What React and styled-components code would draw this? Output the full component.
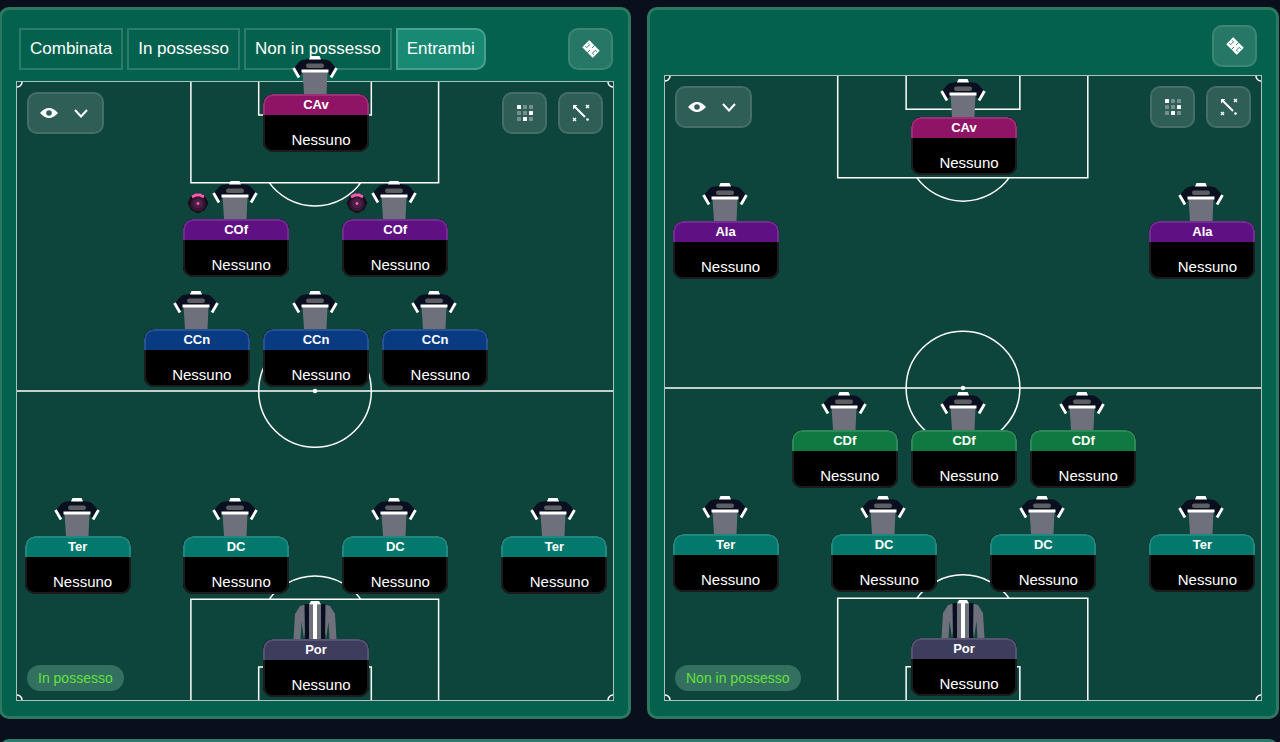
import { useState } from 'react';
import styled, { createGlobalStyle } from 'styled-components';

const roleColors = {
  CAv: '#8f1465',
  COf: '#5f1183',
  Ala: '#5f1183',
  CCn: '#093b82',
  CDf: '#0f7941',
  Ter: '#03786c',
  DC: '#03786c',
  Por: '#3f3d5e',
};

const backLine = [
  { role: 'Ter', x: 10, y: 67.3 },
  { role: 'DC', x: 36.6, y: 67.3 },
  { role: 'DC', x: 63.3, y: 67.3 },
  { role: 'Ter', x: 90, y: 67.3 },
  { role: 'Por', x: 50, y: 83.9, keeper: true },
];

const inPossession = [
  { role: 'CAv', x: 50, y: -4.2 },
  { role: 'COf', x: 36.6, y: 16 },
  { role: 'COf', x: 63.3, y: 16 },
  { role: 'CCn', x: 30, y: 33.8 },
  { role: 'CCn', x: 50, y: 33.8 },
  { role: 'CCn', x: 70, y: 33.8 },
  ...backLine,
].map((player) => ({ ...player, badge: player.role === 'COf' }));

const outOfPossession = [
  { role: 'CAv', x: 50, y: 0.5 },
  { role: 'Ala', x: 10, y: 17.2 },
  { role: 'Ala', x: 90, y: 17.2 },
  { role: 'CDf', x: 30, y: 50.6 },
  { role: 'CDf', x: 50, y: 50.6 },
  { role: 'CDf', x: 70, y: 50.6 },
  ...backLine,
];

const tabs = ['Combinata', 'In possesso', 'Non in possesso', 'Entrambi'];

export default function App() {
  const [activeTab, setActiveTab] = useState('Entrambi');

  return (
    <>
      <GlobalStyle />
      <Page>
        <Panels>
          <Panel>
            <Toolbar>
              <TabList>
                {tabs.map((tab) => (
                  <Tab
                    key={tab}
                    type="button"
                    aria-pressed={tab === activeTab}
                    $active={tab === activeTab}
                    onClick={() => setActiveTab(tab)}
                  >
                    {tab}
                  </Tab>
                ))}
              </TabList>
              <ToolButton type="button" aria-label="Tattica">
                <TacticIcon />
              </ToolButton>
            </Toolbar>
            <Pitch label="In possesso" players={inPossession} />
          </Panel>
          <Panel>
            <Toolbar $compact>
              <ToolButton type="button" aria-label="Tattica">
                <TacticIcon />
              </ToolButton>
            </Toolbar>
            <Pitch label="Non in possesso" players={outOfPossession} />
          </Panel>
        </Panels>
        <LowerPanel />
      </Page>
    </>
  );
}

function Pitch({ label, players }) {
  return (
    <PitchField>
      <PitchLines />
      <PitchTools>
        <ViewButton type="button" aria-label="Visualizza">
          <EyeIcon />
          <ChevronIcon />
        </ViewButton>
        <ToolGroup>
          <ToolButton type="button" aria-label="Posizioni">
            <GridIcon />
          </ToolButton>
          <ToolButton type="button" aria-label="Movimenti">
            <MovesIcon />
          </ToolButton>
        </ToolGroup>
      </PitchTools>
      {players.map((player, index) => (
        <Player key={index} style={{ left: `${player.x}%`, top: `${player.y}%` }}>
          {player.badge && <RoleBadge />}
          {player.keeper ? <KeeperShirt /> : <Shirt />}
          <Card>
            <Role $color={roleColors[player.role]}>{player.role}</Role>
            <PlayerName>Nessuno</PlayerName>
          </Card>
        </Player>
      ))}
      <PhaseLabel>{label}</PhaseLabel>
    </PitchField>
  );
}

function PitchLines() {
  return (
    <LinesSvg aria-hidden="true">
      <line x1="0" x2="100%" y1="50%" y2="50%" />
      <circle cx="0" cy="0" r="5" />
      <circle cx="100%" cy="0" r="5" />
      <circle cx="0" cy="100%" r="5" />
      <circle cx="100%" cy="100%" r="5" />
      <svg viewBox="0 0 500 620" width="100%" height="100%">
        <path d="M125.500 0V101H374V0M193.500 0V33H306.500V0M204 101A57 57 0 0 0 296 101" />
        <path d="M125.500 620V519H374V620M193.500 620V587H306.500V620M204 519A57 57 0 0 1 296 519" />
        <circle cx="250" cy="310" r="56.500" />
        <circle cx="250" cy="310" r="1.500" fill="#fff" />
      </svg>
    </LinesSvg>
  );
}

function Shirt() {
  return (
    <ShirtSvg viewBox="0 0 46 38" aria-hidden="true">
      <path d="M10.500 15H35.500L34.500 38H12Z" fill="#6e717b" />
      <path d="M17 3H29L36 4L39 6L45 13L39.500 21L36 17V14H10V17L6.500 21L1 13L7 6L10 4Z" fill="#0a0f1f" />
      <path d="M17 3.500L18.500 0H27.500L29 3.500Z" fill="#fff" />
      <rect x="14" y="7.500" width="18" height="4.500" rx="2.200" fill="#5e5e62" />
      <path d="M9.500 13.500H36.500V16.500H9.500Z" fill="#fff" />
      <path d="M1.500 12L7 21.500M44.500 12L39 21.500" stroke="#fff" strokeWidth="2.800" />
    </ShirtSvg>
  );
}

function KeeperShirt() {
  return (
    <ShirtSvg viewBox="0 0 46 38" aria-hidden="true">
      <path d="M16 3L8 5L3 13L1.500 38H8.500L9.500 21L12 38V5Z" fill="#6e717b" />
      <path d="M30 3L38 5L43 13L44.500 38H37.500L36.500 21L34 38V5Z" fill="#6e717b" />
      <path d="M11 4H35V24L33 38H13L11 24Z" fill="#6e717b" />
      <path d="M12.500 3H17V38H13ZM29 3H33.500L33 38H29Z" fill="#0a0f1f" />
      <path d="M19 0H27L29 3.500H25V38H21V3.500H17Z" fill="#fff" />
    </ShirtSvg>
  );
}

function RoleBadge() {
  return (
    <BadgeSvg viewBox="0 0 22 22" aria-hidden="true">
      <path d="M11 1L18 4L21.500 11L18 18L11 21.500L4 18L0.500 11L4 4Z" fill="#170d1d" />
      <circle cx="11" cy="12" r="7.500" fill="#371534" />
      <circle cx="11" cy="11.500" r="5" fill="#4c2046" />
      <path d="M5 5L9 3H13L17 5" fill="none" stroke="#ff5cb0" strokeWidth="2.800" />
      <circle cx="11" cy="11.500" r="1.400" fill="#ff5cb0" />
    </BadgeSvg>
  );
}

function TacticIcon() {
  return (
    <svg width="18" height="18" viewBox="0 0 18 18" aria-hidden="true">
      <g transform="rotate(45 9 9)">
        <rect x="1.500" y="4" width="15" height="10" rx="0.500" fill="#fff" />
        <path
          d="M9 4V14M3 7H5V11H3M15 7H13V11H15"
          fill="none"
          stroke="#23766a"
          strokeWidth="0.900"
        />
        <circle cx="9" cy="9" r="1.600" fill="#fff" />
      </g>
    </svg>
  );
}

function EyeIcon() {
  return (
    <svg width="18" height="12" viewBox="0 0 18 12" aria-hidden="true">
      <path
        d="M0 6Q9 -4 18 6Q9 16 0 6ZM9 3.200A2.800 2.800 0 1 0 9 8.800A2.800 2.800 0 1 0 9 3.200Z"
        fill="#fff"
        fillRule="evenodd"
      />
    </svg>
  );
}

function ChevronIcon() {
  return (
    <svg width="14" height="9" viewBox="0 0 14 9" aria-hidden="true">
      <path d="M1 1L7 7.500L13 1" fill="none" stroke="#fff" strokeWidth="2" />
    </svg>
  );
}

function GridIcon() {
  const lit = [0, 5, 7];
  return (
    <svg width="18" height="18" viewBox="0 0 18 18" aria-hidden="true">
      {Array.from({ length: 9 }, (_, i) => (
        <rect
          key={i}
          x={1 + (i % 3) * 6}
          y={1 + Math.floor(i / 3) * 6}
          width="4"
          height="4"
          rx="0.500"
          fill={lit.includes(i) ? '#fff' : '#75908d'}
        />
      ))}
    </svg>
  );
}

function MovesIcon() {
  return (
    <svg width="18" height="18" viewBox="0 0 18 18" aria-hidden="true">
      <path d="M1 1H5.500L1 5.500Z" fill="#fff" />
      <path d="M2 2L13 13" stroke="#fff" strokeWidth="2" />
      <path d="M14 1L17 4M17 1L14 4M1 14L4 17M4 14L1 17" stroke="#fff" strokeWidth="1.400" />
      <circle cx="15.500" cy="15.500" r="1.300" fill="#fff" />
    </svg>
  );
}

const GlobalStyle = createGlobalStyle`
  * {
    box-sizing: border-box;
  }

  body {
    background: #0a0f1e;
    color: #fff;
    font-family: 'Liberation Sans', Arial, sans-serif;
    margin: 0;
  }

  button {
    color: inherit;
    cursor: pointer;
    font-family: inherit;
  }
`;

const Page = styled.main`
  display: flex;
  flex-direction: column;
  gap: 20px;
  height: 100vh;
  margin: 0 1px 0 -1px;
  overflow: hidden;
  padding-top: 7px;
`;

const Panels = styled.div`
  display: grid;
  flex: none;
  gap: 16px;
  grid-template-columns: 1fr 1fr;
`;

const Panel = styled.section`
  background: #04614d;
  border: 3px solid #2d7960;
  border-radius: 10px;
  display: flex;
  flex-direction: column;
  min-height: calc(100vh - 30px);
  padding: 0 14px 15px;
`;

const LowerPanel = styled.section`
  background: #04614d;
  border: 3px solid #2d7a6c;
  border-radius: 10px;
  flex: none;
  height: 40px;
`;

const Toolbar = styled.header`
  align-items: center;
  display: flex;
  justify-content: flex-end;
  padding: ${(props) => (props.$compact ? '15px 5px 8px' : '18px 1px 11px 3px')};
`;

const TabList = styled.nav`
  display: flex;
  gap: 4px;
  margin-right: auto;
`;

const Tab = styled.button`
  background: ${(props) => (props.$active ? '#188a74' : 'transparent')};
  border: 2px solid ${(props) => (props.$active ? '#46a28f' : '#2c7a68')};
  font-size: 17px;
  height: 42px;
  padding: 0 9px;
  white-space: nowrap;

  &:last-child {
    border-radius: 0 10px 10px 0;
  }
`;

const ToolButton = styled.button`
  align-items: center;
  background: rgba(255, 255, 255, 0.14);
  border: 2px solid rgba(255, 255, 255, 0.1);
  border-radius: 10px;
  display: flex;
  height: 42px;
  justify-content: center;
  padding: 0;
  width: 45px;
`;

const ViewButton = styled(ToolButton)`
  gap: 16px;
  padding-right: 3px;
  width: 77px;
`;

const PitchField = styled.div`
  background: #0d443b;
  border: 1px solid #a9c4be;
  flex: 1;
  position: relative;
`;

const LinesSvg = styled.svg`
  fill: none;
  height: 100%;
  inset: 0;
  position: absolute;
  stroke: #fff;
  stroke-width: 1.5px;
  width: 100%;
`;

const PitchTools = styled.div`
  display: flex;
  justify-content: space-between;
  padding: 10px;
  position: relative;
`;

const ToolGroup = styled.div`
  display: flex;
  gap: 11px;
`;

const Player = styled.div`
  align-items: center;
  display: flex;
  flex-direction: column;
  position: absolute;
  transform: translateX(-50%);
`;

const ShirtSvg = styled.svg`
  display: block;
  height: 38px;
  width: 46px;
`;

const BadgeSvg = styled.svg`
  height: 22px;
  left: 6px;
  position: absolute;
  top: 11px;
  width: 22px;
`;

const Card = styled.div`
  background: #000;
  border-radius: 10px;
  box-shadow: inset 0 0 0 2px #1c1c1f;
  margin-left: 2px;
  overflow: hidden;
  width: 106px;
`;

const Role = styled.div`
  background: ${(props) => props.$color};
  border: 2px solid rgba(255, 255, 255, 0.12);
  border-bottom: 0;
  border-radius: 10px 10px 0 0;
  font-size: 13px;
  font-weight: 700;
  height: 21px;
  line-height: 17px;
  text-align: center;
`;

const PlayerName = styled.div`
  font-size: 15px;
  height: 37px;
  line-height: 20px;
  padding: 15px 0 0 10px;
  text-align: center;
`;

const PhaseLabel = styled.span`
  background: #337060;
  border-radius: 13px;
  bottom: 9px;
  color: #63e03c;
  font-size: 14px;
  left: 10px;
  line-height: 26px;
  padding: 0 11px;
  position: absolute;
`;
